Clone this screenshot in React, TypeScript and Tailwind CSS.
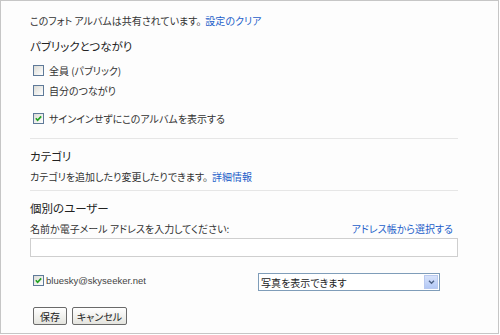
import React, { useState } from "react";

const jp = "[font-family:'Noto_Sans_CJK_JP','Noto_Sans',sans-serif] [font-feature-settings:'palt']";

const Check: React.FC<{ checked: boolean; onChange: () => void }> = ({ checked, onChange }) => (
  <button
    type="button"
    onClick={onChange}
    className="relative w-[11px] h-[11px] shrink-0 border border-[#5f7a99] bg-gradient-to-br from-[#dcdcd6] to-white"
  >
    {checked && (
      <svg viewBox="0 0 10 10" className="absolute inset-0 w-[9px] h-[9px]">
        <path d="M2 4.8 L4 7 L8 2.6" fill="none" stroke="#22a322" strokeWidth="1.8" />
      </svg>
    )}
  </button>
);

export default function App() {
  const [everyone, setEveryone] = useState(false);
  const [connections, setConnections] = useState(false);
  const [noSignin, setNoSignin] = useState(true);
  const [user, setUser] = useState(true);
  const [email, setEmail] = useState("");

  return (
    <div className={`w-[499px] h-[334px] border border-[#c6c6c6] bg-[#fdfdfd] text-[#333] text-[10px] ${jp}`}>
      <div className="pl-[29px] pr-[40px] pt-[11px]">
        {/* 共有の状態 */}
        <div className="h-4 flex items-center">
          このフォト アルバムは共有されています。
          <a href="#" className="ml-[4px] text-[#1d5fc9]">設定のクリア</a>
        </div>

        {/* パブリックとつながり */}
        <div className="mt-[11px] h-4 flex items-center text-[11.5px] text-[#222]">パブリックとつながり</div>
        <div className="mt-[7px] h-4 flex items-center gap-[5px] pl-[3px]">
          <Check checked={everyone} onChange={() => setEveryone(!everyone)} />
          <span>全員 (パブリック)</span>
        </div>
        <div className="mt-[4px] h-4 flex items-center gap-[5px] pl-[3px]">
          <Check checked={connections} onChange={() => setConnections(!connections)} />
          <span>自分のつながり</span>
        </div>
        <div className="mt-[12px] h-4 flex items-center gap-[5px] pl-[3px]">
          <Check checked={noSignin} onChange={() => setNoSignin(!noSignin)} />
          <span>サインインせずにこのアルバムを表示する</span>
        </div>

        <div className="mt-[12px] h-px bg-[#e6e6e6]" />

        {/* カテゴリ */}
        <div className="mt-[10px] h-4 flex items-center text-[11.5px] text-[#222]">カテゴリ</div>
        <div className="mt-[3px] h-4 flex items-center">
          カテゴリを追加したり変更したりできます。
          <a href="#" className="ml-[4px] text-[#1d5fc9]">詳細情報</a>
        </div>

        <div className="mt-[6px] h-px bg-[#e6e6e6]" />

        {/* 個別のユーザー */}
        <div className="mt-[10px] h-4 flex items-center text-[11.5px] text-[#222]">個別のユーザー</div>
        <div className="mt-[3px] h-4 flex items-center justify-between pr-[5px]">
          <span>名前か電子メール アドレスを入力してください:</span>
          <a href="#" className="text-[#1d5fc9]">アドレス帳から選択する</a>
        </div>
        <input
          value={email}
          onChange={(e) => setEmail(e.target.value)}
          className="mt-[2px] block w-full h-[19px] border border-[#cfcfcf] bg-white px-1 outline-none"
        />

        <div className="mt-[16px] h-[18px] flex">
          <div className="w-[228px] flex items-start gap-[2px] pl-[3px] pt-[2px]">
            <Check checked={user} onChange={() => setUser(!user)} />
            <span className="[font-family:'Liberation_Sans',sans-serif] text-[9.5px] leading-[11px] text-[#444]">
              bluesky@skyseeker.net
            </span>
          </div>
          <div className="relative w-[182px] h-[18px] border border-[#7f9db9] bg-white flex items-center">
            <span className="pl-[2px] text-[10px] text-[#222]">写真を表示できます</span>
            <div className="absolute right-[1px] top-[1px] bottom-[1px] w-[14px] border border-[#b9c9ef] bg-gradient-to-b from-[#d8e3fb] to-[#b3c8f5] flex items-center justify-center">
              <svg viewBox="0 0 8 6" className="w-[7px] h-[5px]">
                <path d="M1 1 L4 4 L7 1" fill="none" stroke="#4d6185" strokeWidth="1.6" />
              </svg>
            </div>
          </div>
        </div>

        {/* ボタン */}
        <div className="mt-[16px] flex gap-[5px] pl-[3px]">
          <button className="h-[18px] w-[34px] rounded-[2px] border border-[#6a6a6a] bg-gradient-to-b from-white to-[#e4e4de] text-[10px] text-[#222]">
            保存
          </button>
          <button className="h-[18px] w-[55px] rounded-[2px] border border-[#6a6a6a] bg-gradient-to-b from-white to-[#e4e4de] text-[10px] text-[#222]">
            キャンセル
          </button>
        </div>
      </div>
    </div>
  );
}
